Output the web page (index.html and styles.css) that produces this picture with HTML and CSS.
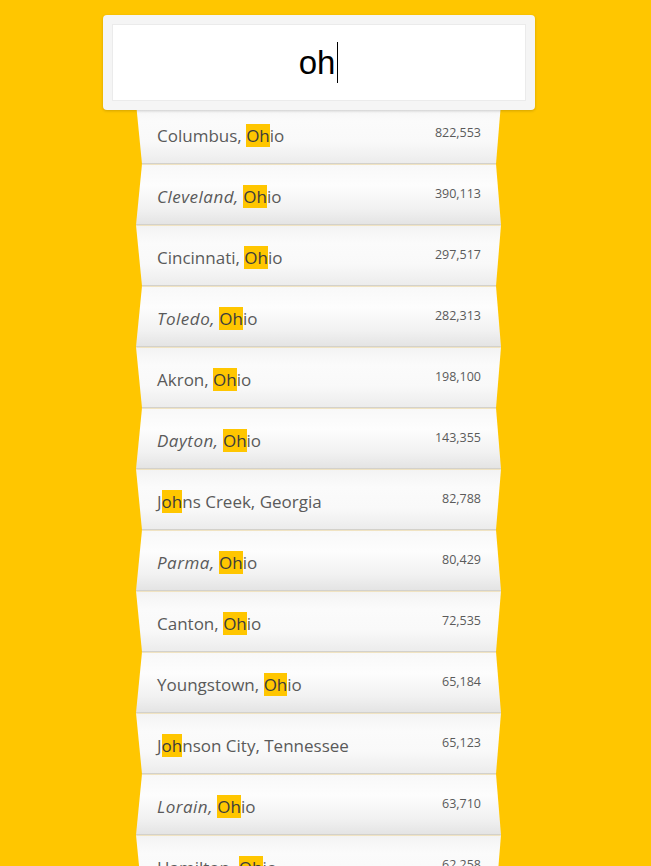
FILE: index.html
```html
<!DOCTYPE html>
<html lang="en">
<head>
<meta charset="utf-8">
<title>Search</title>
<link rel="stylesheet" href="styles.css">
</head>
<body>
<div class="app">
  <div class="search">
    <div class="search-input">
      <span class="query">oh</span><span class="caret"></span>
    </div>
  </div>
  <ul class="results">
    <li class="row"><span class="name"><span class="city">Columbus,</span> <mark>Oh</mark>io</span><span class="pop">822,553</span></li>
    <li class="row alt"><span class="name"><span class="city">Cleveland,</span> <mark>Oh</mark>io</span><span class="pop">390,113</span></li>
    <li class="row"><span class="name"><span class="city">Cincinnati,</span> <mark>Oh</mark>io</span><span class="pop">297,517</span></li>
    <li class="row alt"><span class="name"><span class="city">Toledo,</span> <mark>Oh</mark>io</span><span class="pop">282,313</span></li>
    <li class="row"><span class="name"><span class="city">Akron,</span> <mark>Oh</mark>io</span><span class="pop">198,100</span></li>
    <li class="row alt"><span class="name"><span class="city">Dayton,</span> <mark>Oh</mark>io</span><span class="pop">143,355</span></li>
    <li class="row"><span class="name">J<mark>oh</mark>ns Creek, Georgia</span><span class="pop">82,788</span></li>
    <li class="row alt"><span class="name"><span class="city">Parma,</span> <mark>Oh</mark>io</span><span class="pop">80,429</span></li>
    <li class="row"><span class="name"><span class="city">Canton,</span> <mark>Oh</mark>io</span><span class="pop">72,535</span></li>
    <li class="row alt"><span class="name">Youngstown, <mark>Oh</mark>io</span><span class="pop">65,184</span></li>
    <li class="row"><span class="name">J<mark>oh</mark>nson City, Tennessee</span><span class="pop">65,123</span></li>
    <li class="row alt"><span class="name"><span class="city">Lorain,</span> <mark>Oh</mark>io</span><span class="pop">63,710</span></li>
    <li class="row"><span class="name"><span class="city">Hamilton,</span> <mark>Oh</mark>io</span><span class="pop">62,258</span></li>
  </ul>
</div>
</body>
</html>
```

FILE: styles.css
```css
html, body {
  margin: 0;
  padding: 0;
  background: #ffc600;
}

body {
  font-family: "Open Sans", "DejaVu Sans", sans-serif;
  overflow: hidden;
  height: 866px;
}

.app {
  width: 432px;
  padding: 15px 0 0 103px;
}

.search {
  position: relative;
  z-index: 2;
  background: #f5f5f5;
  border-radius: 4px;
  padding: 9px;
  box-shadow: 0 1px 3px rgba(0, 0, 0, 0.18);
}

.search-input {
  height: 75px;
  background: #fff;
  border: 1px solid #ebebeb;
  display: flex;
  align-items: center;
  justify-content: center;
}

.query {
  font-family: "Liberation Sans", Arial, sans-serif;
  font-size: 33px;
  line-height: 41px;
  color: #000;
  margin-left: -1px;
}

.caret {
  width: 1px;
  height: 41px;
  margin-left: 2px;
  background: #000;
}

.results {
  list-style: none;
  margin: -7px 0 0 33px;
  padding: 0;
  width: 365px;
}

.row {
  box-sizing: border-box;
  height: 61px;
  padding: 4px 20px 0 21px;
  display: flex;
  align-items: center;
  justify-content: space-between;
  border-bottom: 1px solid #d3d1cb;
  box-shadow: inset 0 1px 0 #f0e3c2;
  background: linear-gradient(to bottom, #f3f3f3 0%, #fbfbfb 30%, #f9f9f9 65%, #ececec 100%);
  clip-path: polygon(0 0, 100% 0, calc(100% - 5px) 100%, 6px 100%);
}

.row.alt {
  background: linear-gradient(to bottom, #f8f8f8 0%, #fdfdfd 35%, #f1f1f1 75%, #e4e4e4 100%);
  clip-path: polygon(6px 0, calc(100% - 5px) 0, 100% 100%, 0 100%);
}

.name {
  font-size: 17px;
  color: #5a5a5a;
  white-space: nowrap;
}

.row.alt .city {
  font-style: italic;
  letter-spacing: 0.5px;
}

.name mark {
  background: #ffc600;
  color: #3c3c3c;
}

.pop {
  font-size: 12.5px;
  color: #5a5a5a;
  margin-bottom: 5px;
}
```
